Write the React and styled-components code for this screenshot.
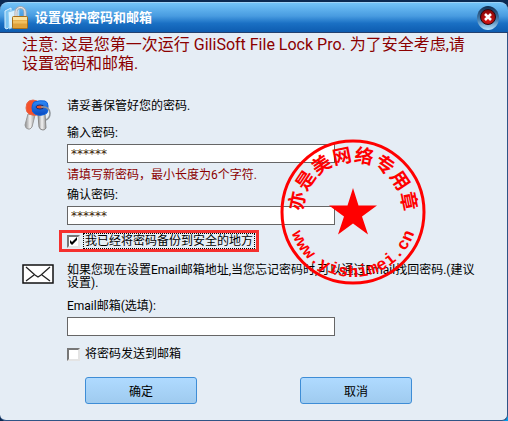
import React, { useState } from 'react';
import styled, { createGlobalStyle } from 'styled-components';

const GlobalStyle = createGlobalStyle`
    * {
        box-sizing: border-box;
    }

    body {
        margin: 0;
        background: linear-gradient(135deg, #0B2A52 70%, #00A0F0);
        font-family: Roboto, "Noto Sans CJK SC", sans-serif;
        font-size: 12px;
        color: #000;
    }
`;

const Dialog = styled.div`
    position: relative;
    display: flex;
    flex-direction: column;
    min-height: 100vh;
    padding-top: 2px;
`;

const TitleBar = styled.header`
    display: flex;
    align-items: center;
    height: 31px;
    padding: 0 9px 0 3px;
    border-radius: 8px 8px 0 0;
    border-top: 1px solid #9FD4F8;
    border-bottom: 1px solid #23406E;
    background: linear-gradient(#73C4F8, #489BE0 45%, #1A70C4 70%, #0D5CB0);
`;

const Title = styled.h1`
    flex: 1;
    margin: 0 0 0 6px;
    color: #FFF;
    font-size: 13px;
    font-weight: bold;
    line-height: 16px;
`;

const CloseButton = styled.button`
    width: 22px;
    height: 24px;
    padding: 0;
    border: none;
    background: none;
`;

const Content = styled.main`
    flex: 1;
    padding-top: 2px;
    background: #E5EDF5;
    border: 1px solid #2F5486;
    border-top: none;
    border-left: none;
    border-radius: 0 0 6px 6px;
`;

const Notice = styled.p`
    margin: 0;
    padding: 0 22px;
    color: #8B0000;
    font-size: 16px;
    line-height: 19px;
    white-space: nowrap;
`;

const Section = styled.section`
    display: grid;
    grid-template-columns: 45px minmax(0, 1fr);
    padding: 0 22px;
    margin-top: ${props => props.$gap}px;
`;

const Text = styled.p`
    margin: 0;
    color: ${props => props.$warn ? '#8B0000' : '#000'};
    line-height: ${props => props.$tight ? 13 : 16}px;
    white-space: nowrap;
`;

const Field = styled.div`
    margin-top: ${props => props.$gap}px;
`;

const FieldLabel = styled.label`
    display: block;
    line-height: 16px;
`;

const TextBox = styled.input`
    display: block;
    width: 64%;
    height: 19px;
    margin-top: 3px;
    padding: 0 3px;
    border: 1px solid #666;
    background: #FFF;
    color: #3A1A00;
    font-family: "DejaVu Sans", sans-serif;
    font-size: 12px;
    outline: none;
`;

const CheckRow = styled.div`
    display: flex;
    align-items: center;
    width: max-content;
    height: 22px;
    margin: ${props => props.$gap}px 0 0 -8px;
    padding: 0 2px 0 5px;
    border: 3px solid ${props => props.$marked ? '#F5302E' : 'transparent'};
`;

const CheckBox = styled.span`
    display: grid;
    width: 13px;
    height: 13px;
    margin-right: 4px;

    > * {
        grid-area: 1 / 1;
    }

    input {
        appearance: none;
        width: 13px;
        height: 13px;
        margin: 0;
        background: #FFF;
        border: 2px solid;
        border-color: #777 #E4E4E4 #E4E4E4 #777;
    }

    svg {
        pointer-events: none;
    }
`;

const CheckLabel = styled.label`
    padding: 0 1px;
    line-height: 14px;
    outline: ${props => props.$focused ? '1px dotted #000' : 'none'};
`;

const Buttons = styled.div`
    display: flex;
    justify-content: space-between;
    margin-top: 12px;
    padding: 0 95px 0 85px;
`;

const Button = styled.button`
    width: 112px;
    height: 27px;
    padding: 0;
    border: 1px solid #3E8DD6;
    border-radius: 3px;
    background: linear-gradient(#AFDAFF, #9FCBEF);
    color: #000;
    font-family: inherit;
    font-size: 12px;
`;

const StampArt = styled.svg`
    position: absolute;
    left: 279px;
    top: 138px;
    pointer-events: none;
`;

const FolderLockIcon = () => (
    <svg width="26" height="26" viewBox="0 0 26 26" aria-hidden="true">
        <path d="M2 6l6-3v17l-4 4-2-1z" fill="#7CC4F2" stroke="#D8F1FF" />
        <path d="M5 7l11-3v16l-10 4z" fill="#D9F2FF" stroke="#8CCBF2" />
        <path d="M13 13V7a4.500 4.500 0 0 1 9 0v6" fill="none" stroke="#A9ABB0" strokeWidth="3" />
        <path d="M13 13V7a4.500 4.500 0 0 1 9 0v6" fill="none" stroke="#F8F8F8" strokeWidth="1" />
        <rect x="9.500" y="11.500" width="15" height="12" rx="1" fill="#DFA23A" stroke="#A8701A" />
        <path d="M10 13.500h14" stroke="#FBE3A0" strokeWidth="3" />
        <path d="M10 17h14" stroke="#F0C060" strokeWidth="3" />
    </svg>
);

const CloseIcon = () => (
    <svg width="22" height="24" viewBox="0 0 22 24" aria-hidden="true">
        <defs>
            <linearGradient id="ring" x1="0" y1="0" x2="0" y2="1">
                <stop offset="0" stopColor="#0E2C50" />
                <stop offset="0.600" stopColor="#4A84B5" />
                <stop offset="1" stopColor="#B9E4FF" />
            </linearGradient>
            <radialGradient id="red" cx="0.5" cy="0.7" r="0.6">
                <stop offset="0" stopColor="#E01818" />
                <stop offset="1" stopColor="#8E0808" />
            </radialGradient>
        </defs>
        <ellipse cx="11" cy="12" rx="11" ry="12" fill="url(#ring)" />
        <circle cx="11" cy="11" r="7.500" fill="url(#red)" stroke="#2A0A14" />
        <path d="M8 8l6 6M14 8l-6 6" stroke="#FFF" strokeWidth="2.500" />
    </svg>
);

const KeysIcon = () => (
    <svg width="30" height="34" viewBox="0 0 30 34" aria-hidden="true">
        <defs>
            <linearGradient id="metal">
                <stop offset="0" stopColor="#888" />
                <stop offset="0.500" stopColor="#F2F2F2" />
                <stop offset="1" stopColor="#999" />
            </linearGradient>
            <linearGradient id="blue" x1="0" y1="0" x2="0" y2="1">
                <stop offset="0" stopColor="#2F8CFA" />
                <stop offset="1" stopColor="#0848C0" />
            </linearGradient>
        </defs>
        <path d="M6 16l7 1-3 12q-2 3-4 2-3-1-3-4z" fill="url(#metal)" stroke="#999" />
        <path d="M16 17l7-1 1 14q-1 2-3 2-3 0-4-3z" fill="url(#metal)" stroke="#888" />
        <path d="M7 3q4-2 8 0l1 14q-5 1-9-1-3-2-3-6 0-5 3-7z" fill="#F4512C" stroke="#E8684A" />
        <path d="M12 4q6-2 11-1 3 1 3 5 0 4-1 7-6 4-12 1-3-1-3-6 0-4 2-6z" fill="url(#blue)" stroke="#0A60DC" />
        <ellipse cx="18" cy="9" rx="4" ry="2" fill="#E8502C" stroke="#0A2F80" />
        <path d="M19 9q8-1 9 6 0 5-4 7" fill="none" stroke="#8D9399" strokeWidth="1.500" />
    </svg>
);

const MailIcon = () => (
    <svg width="32" height="20" viewBox="0 0 32 20" aria-hidden="true">
        <rect x="1" y="1" width="30" height="18" fill="#FFF" stroke="#111" strokeWidth="1.500" />
        <path d="M4 3l9 8 3 2 3-2 9-8M4 17l8-6M28 17l-8-6" fill="none" stroke="#222" strokeWidth="1.300" />
    </svg>
);

const CheckMark = () => (
    <svg width="13" height="13" viewBox="0 0 13 13" aria-hidden="true">
        <path d="M3 5v3l2 2 5-5V2L5 7z" fill="#000" />
    </svg>
);

// Puts every glyph on a circle; bottom text reads left to right with its feet outwards.
const ring = (text, { radius, step, width, rise, bottom }) => {
    const xs = [];
    const ys = [];
    const turns = [];
    [...text].forEach((_, i) => {
        const fromMiddle = (i - (text.length - 1) / 2) * step;
        const turn = bottom ? -fromMiddle : fromMiddle;
        const r = bottom ? radius : -radius;
        const a = turn * Math.PI / 180;
        const dx = -width / 2;
        const dy = r + rise;
        xs.push((dx * Math.cos(a) - dy * Math.sin(a)).toFixed(1));
        ys.push((dx * Math.sin(a) + dy * Math.cos(a)).toFixed(1));
        turns.push(turn.toFixed(1));
    });
    return { x: xs.join(' '), y: ys.join(' '), rotate: turns.join(' ') };
};

const Stamp = () => (
    <StampArt width="148" height="148" viewBox="-74 -74 148 148">
        <circle r="71" fill="none" stroke="#F00" strokeWidth="3" />
        <path
            d="M0-24 5.500-6.500H24L9 4.500 15 22.500 0 11.500-15 22.500-9 4.500-24-6.500H-5.500z"
            fill="#F00"
        />
        <text
            {...ring('亦是美网络专用章', { radius: 57, step: 22.5, width: 19, rise: 7 })}
            fill="#F00"
            fontFamily="'Noto Sans CJK SC', sans-serif"
            fontSize="19"
            fontWeight="bold"
        >
            亦是美网络专用章
        </text>
        <text
            {...ring('www.yishimei.cn', { radius: 61, step: 9.5, width: 10, rise: 4, bottom: true })}
            fill="#F00"
            fontFamily="'Liberation Mono', monospace"
            fontSize="17"
            fontWeight="bold"
        >
            www.yishimei.cn
        </text>
    </StampArt>
);

const CheckOption = ({ id, label, gap, marked, focused, initial }) => {
    const [checked, setChecked] = useState(initial);
    return (
        <CheckRow $gap={gap} $marked={marked}>
            <CheckBox>
                <input id={id} type="checkbox" checked={checked} onChange={e => setChecked(e.target.checked)} />
                {checked && <CheckMark />}
            </CheckBox>
            <CheckLabel htmlFor={id} $focused={focused}>{label}</CheckLabel>
        </CheckRow>
    );
};

export default function App() {
    const [password, setPassword] = useState('******');
    const [confirm, setConfirm] = useState('******');
    const [email, setEmail] = useState('');

    return (
        <>
            <GlobalStyle />
            <Dialog role="dialog" aria-labelledby="title">
                <TitleBar>
                    <FolderLockIcon />
                    <Title id="title">设置保护密码和邮箱</Title>
                    <CloseButton type="button" aria-label="关闭"><CloseIcon /></CloseButton>
                </TitleBar>
                <Content>
                    <Notice>
                        注意: 这是您第一次运行 GiliSoft File Lock Pro. 为了安全考虑,请<br />设置密码和邮箱.
                    </Notice>
                    <Section $gap={25}>
                        <KeysIcon />
                        <div>
                            <Text>请妥善保管好您的密码.</Text>
                            <Field $gap={11}>
                                <FieldLabel htmlFor="password">输入密码:</FieldLabel>
                                <TextBox id="password" value={password} onChange={e => setPassword(e.target.value)} />
                            </Field>
                            <Field $gap={4}>
                                <Text $warn>请填写新密码，最小长度为6个字符.</Text>
                            </Field>
                            <Field $gap={4}>
                                <FieldLabel htmlFor="confirm">确认密码:</FieldLabel>
                                <TextBox id="confirm" value={confirm} onChange={e => setConfirm(e.target.value)} />
                            </Field>
                            <CheckOption id="saved" label="我已经将密码备份到安全的地方" gap={5} marked focused initial />
                        </div>
                    </Section>
                    <Section $gap={12}>
                        <MailIcon />
                        <div>
                            <Text $tight>
                                如果您现在设置Email邮箱地址,当您忘记密码时,可以通过Email找回密码.(建议<br />设置).
                            </Text>
                            <Field $gap={8}>
                                <FieldLabel htmlFor="email">Email邮箱(选填):</FieldLabel>
                                <TextBox id="email" type="email" value={email} onChange={e => setEmail(e.target.value)} />
                            </Field>
                            <CheckOption id="send" label="将密码发送到邮箱" gap={7} initial={false} />
                        </div>
                    </Section>
                    <Buttons>
                        <Button type="button">确定</Button>
                        <Button type="button">取消</Button>
                    </Buttons>
                </Content>
                <Stamp />
            </Dialog>
        </>
    );
}
